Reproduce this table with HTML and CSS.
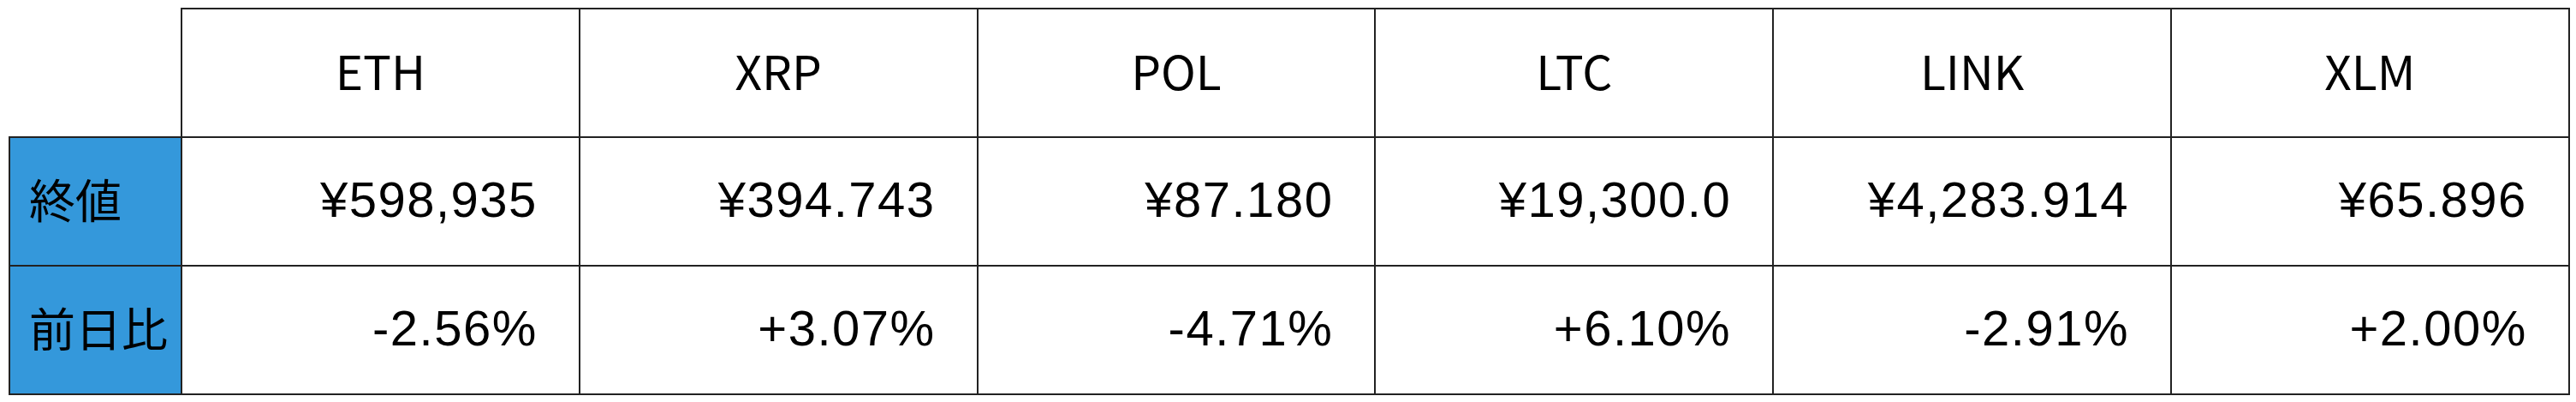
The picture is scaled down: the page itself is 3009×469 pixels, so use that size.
FILE: index.html
```html
<!DOCTYPE html>
<html lang="ja">
<head>
<meta charset="utf-8">
<link rel="stylesheet" href="styles.css">
</head>
<body>
<table class="quotes">
  <colgroup>
    <col class="c-label">
    <col class="c-coin"><col class="c-coin"><col class="c-coin"><col class="c-coin"><col class="c-coin"><col class="c-coin">
  </colgroup>
  <thead>
    <tr>
      <th class="corner"></th>
      <th class="coin">ETH</th>
      <th class="coin">XRP</th>
      <th class="coin">POL</th>
      <th class="coin">LTC</th>
      <th class="coin">LINK</th>
      <th class="coin">XLM</th>
    </tr>
  </thead>
  <tbody>
    <tr>
      <th class="label">終値</th>
      <td class="num">¥598,935</td>
      <td class="num">¥394.743</td>
      <td class="num">¥87.180</td>
      <td class="num">¥19,300.0</td>
      <td class="num">¥4,283.914</td>
      <td class="num">¥65.896</td>
    </tr>
    <tr>
      <th class="label">前日比</th>
      <td class="num">-2.56%</td>
      <td class="num">+3.07%</td>
      <td class="num">-4.71%</td>
      <td class="num">+6.10%</td>
      <td class="num">-2.91%</td>
      <td class="num">+2.00%</td>
    </tr>
  </tbody>
</table>
</body>
</html>
```
FILE: styles.css
```css
html, body {
  margin: 0;
  padding: 0;
  background: #ffffff;
}

body {
  padding: 9px 0 0 10px;
}

.quotes {
  border-collapse: collapse;
  table-layout: fixed;
  width: 2990px;
  font-family: "Noto Sans CJK JP", "Liberation Sans", sans-serif;
  font-size: 54px;
  font-weight: 400;
  color: #000;
}

.c-label { width: 201px; }
.c-coin { width: 464.8px; }

.quotes th,
.quotes td {
  height: 150px;
  padding: 0;
  border: 2px solid #222;
  box-sizing: border-box;
  font-weight: 400;
  line-height: 1;
}

.quotes th.corner {
  border: none;
  background: #fff;
}

.quotes th.coin {
  font-size: 55px;
  text-align: center;
  padding-bottom: 8px;
}

.quotes th.label {
  background: #3498db;
  text-align: left;
  padding-left: 22px;
  padding-bottom: 6px;
}

.quotes td.num {
  font-family: "Liberation Sans", "Noto Sans CJK JP", sans-serif;
  font-size: 58px;
  letter-spacing: 1.5px;
  text-align: right;
  padding-right: 48px;
  padding-bottom: 4px;
}
```
